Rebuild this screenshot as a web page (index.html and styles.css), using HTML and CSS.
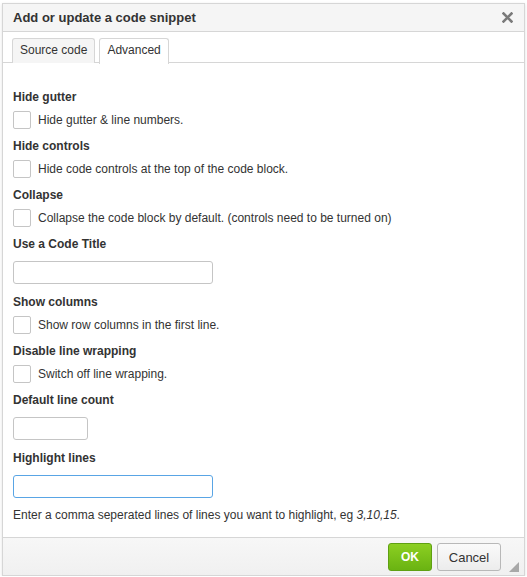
FILE: index.html
```html
<!DOCTYPE html>
<html>
<head>
<meta charset="utf-8">
<link rel="stylesheet" href="styles.css">
</head>
<body>
<div class="dialog">
  <div class="head">
    <span class="title">Add or update a code snippet</span>
    <svg class="close" width="11" height="11" viewBox="0 0 11 11"><path d="M1.5 1.5 L9.5 9.5 M9.5 1.5 L1.5 9.5" stroke="#7a7a7a" stroke-width="2.6" stroke-linecap="square"/></svg>
  </div>
  <div class="tabs">
    <div class="tab">Source code</div>
    <div class="tab active">Advanced</div>
  </div>
  <div class="body">
    <div class="group cbgroup">
      <div class="label">Hide gutter</div>
      <div class="cbrow"><span class="cb"></span><span>Hide gutter &amp; line numbers.</span></div>
    </div>
    <div class="group cbgroup">
      <div class="label">Hide controls</div>
      <div class="cbrow"><span class="cb"></span><span>Hide code controls at the top of the code block.</span></div>
    </div>
    <div class="group cbgroup">
      <div class="label">Collapse</div>
      <div class="cbrow"><span class="cb"></span><span>Collapse the code block by default. (controls need to be turned on)</span></div>
    </div>
    <div class="group ingroup">
      <div class="label">Use a Code Title</div>
      <div class="input wide"></div>
    </div>
    <div class="group cbgroup">
      <div class="label">Show columns</div>
      <div class="cbrow"><span class="cb"></span><span>Show row columns in the first line.</span></div>
    </div>
    <div class="group cbgroup">
      <div class="label">Disable line wrapping</div>
      <div class="cbrow"><span class="cb"></span><span>Switch off line wrapping.</span></div>
    </div>
    <div class="group ingroup">
      <div class="label">Default line count</div>
      <div class="input narrow"></div>
    </div>
    <div class="group ingroup last">
      <div class="label">Highlight lines</div>
      <div class="input wide focus"></div>
      <div class="help">Enter a comma seperated lines of lines you want to highlight, eg <i>3,10,15</i>.</div>
    </div>
  </div>
  <div class="foot">
    <button class="btn ok">OK</button>
    <button class="btn cancel">Cancel</button>
    <span class="grip"></span>
  </div>
</div>
</body>
</html>
```

FILE: styles.css
```css
html, body {
  margin: 0;
  padding: 0;
  background: #fff;
}
body {
  font-family: "Liberation Sans", Arial, sans-serif;
  color: #333;
  font-size: 12px;
}
.dialog {
  width: 523px;
  height: 573px;
  margin: 3px 0 0 2px;
  border: 1px solid #d6d6d6;
  box-sizing: border-box;
  display: flex;
  flex-direction: column;
  background: #fff;
  box-shadow: 0 1px 3px rgba(0,0,0,0.12);
}
.head {
  height: 26px;
  border-bottom: 1px solid #d6d6d6;
  background: #f5f5f5;
  display: flex;
  align-items: center;
  justify-content: space-between;
  padding: 0 10px 1px 10px;
}
.title {
  font-size: 13px;
  font-weight: bold;
  color: #333;
}
.close {
  display: block;
  margin-right: 1px;
  margin-top: 1px;
}
.tabs {
  height: 24px;
  padding: 6px 0 0 9px;
  border-bottom: 1px solid #d6d6d6;
  display: flex;
  gap: 4px;
  background: #fff;
}
.tab {
  height: 24px;
  line-height: 23px;
  padding: 0 7px;
  border: 1px solid #d6d6d6;
  border-bottom: none;
  border-radius: 3px 3px 0 0;
  background: #f5f5f5;
  color: #333;
  font-size: 12px;
  margin-bottom: -1px;
}
.tab.active {
  background: #fff;
  height: 25px;
}
.body {
  flex: 1;
  padding: 26px 10px 0 10px;
  display: flex;
  flex-direction: column;
}
.group {
  display: flex;
  flex-direction: column;
  align-items: flex-start;
}
.label {
  font-weight: bold;
  line-height: 16px;
  font-size: 12px;
}
.cbgroup {
  padding-bottom: 9px;
}
.cbgroup .label {
  margin-bottom: 6px;
}
.ingroup {
  padding-bottom: 10px;
}
.ingroup .label {
  margin-bottom: 9px;
}
.cbrow {
  display: flex;
  align-items: center;
  gap: 7px;
  height: 18px;
  line-height: 18px;
}
.cb {
  width: 18px;
  height: 18px;
  box-sizing: border-box;
  border: 1px solid #c5c5c5;
  border-radius: 2px;
  background: #fff;
}
.input {
  height: 23px;
  box-sizing: border-box;
  border: 1px solid #c5c5c5;
  border-radius: 3px;
  background: #fff;
}
.input.wide {
  width: 200px;
}
.input.narrow {
  width: 75px;
}
.input.focus {
  border-color: #59a5e5;
}
.help {
  margin-top: 9px;
  line-height: 16px;
}
.foot {
  border-top: 1px solid #d6d6d6;
  background: linear-gradient(#f7f7f7, #f0f0f0);
  display: flex;
  justify-content: flex-end;
  align-items: flex-start;
  padding: 5px 23px 0 0;
  box-sizing: border-box;
  height: 38px;
  gap: 5px;
  position: relative;
}
.btn {
  height: 28px;
  border-radius: 3px;
  font-family: "Liberation Sans", Arial, sans-serif;
  padding: 0;
  margin: 0;
  cursor: pointer;
}
.ok {
  width: 44px;
  border: 1px solid #5fa012;
  background: linear-gradient(#8ccf22, #6ab312);
  color: #fff;
  font-weight: bold;
  font-size: 12px;
}
.cancel {
  width: 64px;
  border: 1px solid #b8b8b8;
  background: linear-gradient(#fafafa, #ececec);
  color: #333;
  font-size: 13px;
}
.grip {
  position: absolute;
  right: 5px;
  bottom: 3px;
  width: 0;
  height: 0;
  border-left: 10px solid transparent;
  border-bottom: 10px solid #a8a8a8;
}
```
